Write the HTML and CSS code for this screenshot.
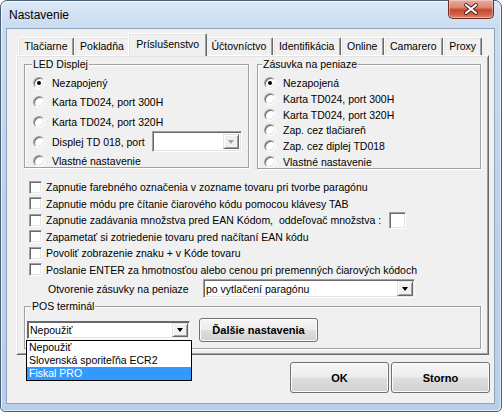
FILE: index.html
```html
<!DOCTYPE html>
<html lang="sk">
<head>
<meta charset="utf-8">
<title>Nastavenie</title>
<link rel="stylesheet" href="styles.css">
</head>
<body>
<div class="window">
  <div class="titlebar">
    <span class="title">Nastavenie</span>
    <div class="close">
      <svg width="44" height="17" viewBox="0 0 44 17">
        <path d="M17 4 L27 12 M27 4 L17 12" stroke="#4b1f19" stroke-width="4" stroke-linecap="round"/>
        <path d="M17 4 L27 12 M27 4 L17 12" stroke="#ffffff" stroke-width="2.2" stroke-linecap="round"/>
      </svg>
    </div>
  </div>
  <div class="client">
    <div class="tabs">
      <div class="tab">Tlačiarne</div>
      <div class="tab">Pokladňa</div>
      <div class="tab active">Príslušenstvo</div>
      <div class="tab">Účtovníctvo</div>
      <div class="tab">Identifikácia</div>
      <div class="tab">Online</div>
      <div class="tab">Camarero</div>
      <div class="tab">Proxy</div>
    </div>
    <div class="panel">
      <div class="groups">
        <div class="group group-led">
          <span class="group-label">LED Displej</span>
          <div class="radio-list radio-list-led">
            <div class="opt"><span class="radio on"></span><span>Nezapojený</span></div>
            <div class="opt"><span class="radio"></span><span>Karta TD024, port 300H</span></div>
            <div class="opt"><span class="radio"></span><span>Karta TD024, port 320H</span></div>
            <div class="opt"><span class="radio"></span><span>Displej TD 018, port</span>
              <div class="combo combo-port disabled"><span class="combo-text"></span><span class="combo-btn"><span class="arrow"></span></span></div>
            </div>
            <div class="opt"><span class="radio"></span><span>Vlastné nastavenie</span></div>
          </div>
        </div>
        <div class="group group-drawer">
          <span class="group-label group-label-drawer">Zásuvka na peniaze</span>
          <div class="radio-list radio-list-drawer">
            <div class="opt"><span class="radio on"></span><span>Nezapojená</span></div>
            <div class="opt"><span class="radio"></span><span>Karta TD024, port 300H</span></div>
            <div class="opt"><span class="radio"></span><span>Karta TD024, port 320H</span></div>
            <div class="opt"><span class="radio"></span><span>Zap. cez tlačiareň</span></div>
            <div class="opt"><span class="radio"></span><span>Zap. cez diplej TD018</span></div>
            <div class="opt"><span class="radio"></span><span>Vlastné nastavenie</span></div>
          </div>
        </div>
      </div>

      <div class="checks">
        <div class="chk-row"><span class="check"></span><span>Zapnutie farebného označenia v zozname tovaru pri tvorbe paragónu</span></div>
        <div class="chk-row"><span class="check"></span><span>Zapnutie módu pre čítanie čiarového kódu pomocou klávesy TAB</span></div>
        <div class="chk-row"><span class="check"></span><span class="pre">Zapnutie zadávania množstva pred EAN Kódom,  oddeľovač množstva :</span><span class="small-input"></span></div>
        <div class="chk-row"><span class="check"></span><span>Zapametať si zotriedenie tovaru pred načítaní EAN kódu</span></div>
        <div class="chk-row"><span class="check"></span><span>Povoliť zobrazenie znaku + v Kóde tovaru</span></div>
        <div class="chk-row"><span class="check"></span><span>Poslanie ENTER za hmotnosťou alebo cenou pri premenných čiarových kódoch</span></div>
      </div>

      <div class="drawer-row">
        <span class="drawer-label">Otvorenie zásuvky na peniaze</span>
        <div class="combo combo-drawer"><span class="combo-text">po vytlačení paragónu</span><span class="combo-btn"><span class="arrow"></span></span></div>
      </div>

      <div class="group group-pos">
        <span class="group-label group-label-pos">POS terminál</span>
        <div class="pos-row">
          <div class="combo combo-pos"><span class="combo-text">Nepoužiť</span><span class="combo-btn"><span class="arrow"></span></span></div>
          <button class="btn btn-more">Ďalšie nastavenia</button>
        </div>
        <div class="dropdown">
          <div class="dd-item">Nepoužiť</div>
          <div class="dd-item">Slovenská sporiteľňa ECR2</div>
          <div class="dd-item selected">Fiskal PRO</div>
        </div>
      </div>
    </div>

    <div class="actions">
      <button class="btn btn-main">OK</button>
      <button class="btn btn-main">Storno</button>
    </div>
  </div>
</div>
</body>
</html>
```

FILE: styles.css
```css
* { box-sizing: border-box; }
html, body { margin: 0; padding: 0; }
body {
  width: 502px;
  height: 412px;
  overflow: hidden;
  background: #ffffff;
  font-family: "Liberation Sans", Arial, sans-serif;
  font-size: 10.5px;
  color: #000;
}

.window {
  width: 502px;
  height: 412px;
  border: 1px solid #4d5f77;
  border-radius: 7px 7px 5px 5px;
  background: linear-gradient(180deg, #dbe8f6 0px, #cadcf1 26px, #bcd2ec 200px, #b7cfea 412px);
  display: flex;
  flex-direction: column;
  box-shadow: inset 1px 1px 0 rgba(255,255,255,0.7), inset -1px -1px 0 rgba(255,255,255,0.6);
}

.titlebar {
  height: 26px;
  display: flex;
  align-items: flex-start;
  flex: none;
}
.title {
  font-size: 12px;
  line-height: 14px;
  margin: 7px 0 0 8px;
  color: #000;
}
.close {
  margin-left: auto;
  margin-right: 7px;
  margin-top: -1px;
  width: 46px;
  height: 19px;
  border: 1px solid #6b2d22;
  border-top: none;
  border-radius: 0 0 5px 5px;
  background: linear-gradient(180deg, #e8aa9c 0%, #dc8a77 40%, #c7482e 55%, #cf6048 80%, #dd8a6f 100%);
  box-shadow: inset 0 0 0 1px rgba(255,255,255,0.35);
  display: flex;
  align-items: center;
  justify-content: center;
}
.close svg { display: block; }

.client {
  flex: 1;
  margin: 1px 6px 7px 5px;
  border: 1px solid #8ea3bd;
  background: #f0f0f0;
  padding: 4px 0 0 9px;
  display: flex;
  flex-direction: column;
}

/* tabs */
.tabs {
  display: flex;
  height: 22px;
  padding-left: 2px;
  align-items: flex-end;
  position: relative;
  z-index: 1;
}
.tab {
  height: 18px;
  padding: 0 5.3px;
  line-height: 17px;
  border: 1px solid;
  border-color: #ffffff #696969 transparent #ffffff;
  border-bottom: none;
  border-radius: 2px 2px 0 0;
  box-shadow: inset -1px 0 0 #a0a0a0, inset 1px 1px 0 #e3e3e3;
  background: #f0f0f0;
  white-space: nowrap;
}
.tab.active {
  height: 23px;
  margin: 0 -2px -1px;
  padding: 2px 7px 0;
  line-height: 16px;
  position: relative;
  z-index: 2;
}

.panel {
  width: 473px;
  height: 300px;
  border: 1px solid;
  border-color: #ffffff #696969 #696969 #ffffff;
  box-shadow: inset 1px 1px 0 #e3e3e3, inset -1px -1px 0 #a0a0a0;
  background: #f0f0f0;
  padding: 8px 0 0 7px;
  display: flex;
  flex-direction: column;
}

/* group boxes */
.groups {
  display: flex;
  gap: 8px;
}
.group {
  position: relative;
  border: 1px solid #a0a0a0;
  box-shadow: inset 1px 1px 0 #fff, 1px 1px 0 #fff;
}
.group-led { width: 225px; height: 104px; }
.group-drawer { width: 224px; height: 105px; }
.group-label {
  position: absolute;
  top: -8px;
  left: 7px;
  padding: 0 1px;
  line-height: 14px;
  background: #f0f0f0;
  white-space: nowrap;
}
.group-label-drawer { left: 4px; }
.group-label-pos { left: 6px; }

.radio-list { display: flex; flex-direction: column; }
.radio-list-led { padding: 8px 0 0 8px; }
.radio-list-led .opt { height: 19.6px; gap: 7px; }
.radio-list-drawer { padding: 10.5px 0 0 6px; }
.radio-list-drawer .opt { height: 15.7px; gap: 7px; }
.opt {
  display: flex;
  align-items: center;
  white-space: nowrap;
}

.radio {
  flex: none;
  width: 12px;
  height: 12px;
  border-radius: 50%;
  background: #fff;
  border: 1px solid;
  border-color: #a0a0a0 #ffffff #ffffff #a0a0a0;
  box-shadow: inset 1px 1px 0 #696969, inset -1px -1px 0 #e3e3e3;
  position: relative;
}
.radio.on::after {
  content: "";
  position: absolute;
  left: 3px;
  top: 3px;
  width: 4px;
  height: 4px;
  border-radius: 50%;
  background: #000;
}

.check {
  flex: none;
  width: 13px;
  height: 13px;
  background: #fff;
  border: 1px solid;
  border-color: #a0a0a0 #ffffff #ffffff #a0a0a0;
  box-shadow: inset 1px 1px 0 #696969, inset -1px -1px 0 #e3e3e3;
}

/* combos */
.combo {
  display: flex;
  align-items: stretch;
  background: #fff;
  border: 1px solid;
  border-color: #a0a0a0 #ffffff #ffffff #a0a0a0;
  box-shadow: inset 1px 1px 0 #696969, inset -1px -1px 0 #e3e3e3;
  padding: 2px;
}
.combo-text {
  flex: 1;
  padding-left: 1px;
  white-space: nowrap;
  overflow: hidden;
  display: flex;
  align-items: center;
}
.combo-btn {
  flex: none;
  width: 16px;
  background: #f0f0f0;
  border: 1px solid;
  border-color: #e3e3e3 #696969 #696969 #e3e3e3;
  box-shadow: inset 1px 1px 0 #fff, inset -1px -1px 0 #a0a0a0;
  display: flex;
  align-items: center;
  justify-content: center;
}
.arrow {
  width: 0;
  height: 0;
  border-left: 3.5px solid transparent;
  border-right: 3.5px solid transparent;
  border-top: 4px solid #000;
}
.disabled .arrow { border-top-color: #a0a0a0; }

.combo-port {
  width: 90px;
  height: 21px;
  margin-left: auto;
  margin-right: 6px;
}

/* checkboxes */
.checks {
  display: flex;
  flex-direction: column;
  margin-top: 10px;
  padding-left: 5px;
}
.chk-row {
  display: flex;
  align-items: center;
  height: 16.5px;
  gap: 4px;
  white-space: nowrap;
}
.pre { white-space: pre; }
.small-input {
  width: 17px;
  height: 17px;
  margin-left: 4px;
  background: #fff;
  border: 1px solid;
  border-color: #a0a0a0 #ffffff #ffffff #a0a0a0;
  box-shadow: inset 1px 1px 0 #696969, inset -1px -1px 0 #e3e3e3;
}

.drawer-row {
  display: flex;
  align-items: center;
  margin-top: 1px;
  padding-left: 24px;
}
.drawer-label { width: 155px; white-space: nowrap; }
.combo-drawer { width: 212px; height: 19px; padding: 1px; }
.combo-drawer .combo-btn { width: 16px; }

/* POS */
.group-pos {
  width: 457px;
  height: 43px;
  margin-top: 8px;
}
.pos-row {
  display: flex;
  align-items: center;
  gap: 9px;
  padding: 11px 0 0 2px;
}
.combo-pos {
  width: 163px;
  height: 18px;
  padding: 1px;
  border-color: #696969 #ffffff #ffffff #696969;
}

.dropdown {
  position: absolute;
  left: 1px;
  top: 33px;
  width: 166px;
  background: #fff;
  border: 1px solid #000;
  z-index: 5;
}
.dd-item {
  height: 13px;
  line-height: 13px;
  padding-left: 2px;
  white-space: nowrap;
}
.dd-item.selected { background: #3399ff; color: #fff; }

/* buttons */
.btn {
  font-family: "Liberation Sans", Arial, sans-serif;
  font-weight: bold;
  font-size: 11px;
  color: #000;
  border: 1px solid #707070;
  border-radius: 3px;
  background: linear-gradient(180deg, #f6f6f6 0%, #ececec 48%, #dedede 52%, #d0d0d0 100%);
  box-shadow: inset 0 0 0 1px #fbfbfb;
  padding: 0;
}
.btn-more { width: 119px; height: 24px; }

.actions {
  display: flex;
  justify-content: flex-end;
  gap: 2px;
  margin-top: 7px;
  padding-right: 4px;
}
.btn-main { width: 99px; height: 31px; }
```
